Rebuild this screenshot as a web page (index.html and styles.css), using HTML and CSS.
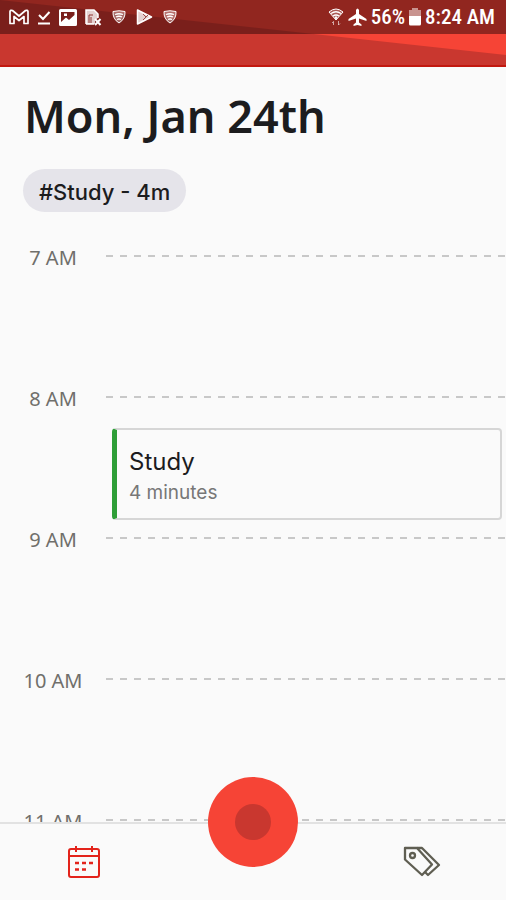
FILE: index.html
```html
<!DOCTYPE html>
<html lang="en">
<head>
<meta charset="utf-8">
<meta name="viewport" content="width=device-width, initial-scale=1">
<title>Mon, Jan 24th</title>
<link rel="stylesheet" href="styles.css">
</head>
<body>
<div class="app">
  <header class="top">
    <svg class="top-art" viewBox="0 0 506 65" preserveAspectRatio="none" aria-hidden="true"><path d="M0 0H506V55Z" fill="#f64436"/></svg>
    <div class="status">
      <div class="status-left">
        <svg width="20" height="16" viewBox="0 0 20 16" fill="none" stroke="#fff" stroke-width="1.7" stroke-linejoin="round"><path d="M1 14.500V2.500Q1.500 .8 3.500 1.500L10 7L16.500 1.500Q18.500 .8 19 2.500V14.500H15V7.500L10 11.500L5 7.500V14.500Z"/></svg>
        <svg width="14" height="16" viewBox="0 0 14 16" fill="none" stroke="#fff" stroke-width="2"><path d="M2 6L6 10L12.500 3M1 14.500H13"/></svg>
        <svg width="18" height="17" viewBox="0 0 18 17"><path fill="#fff" fill-rule="evenodd" d="M1.500 0H16.500Q18 0 18 1.500V15.500Q18 17 16.500 17H1.500Q0 17 0 15.500V1.500Q0 0 1.500 0ZM2 3V13L7 8.500L10 11L15.500 6V3ZM5 4.500H8V7H5Z"/></svg>
        <svg width="17" height="17" viewBox="0 0 17 17"><path fill="#fff" fill-opacity=".8" d="M1 1H9L13 5V9L10 11V15H1Z"/><path fill="none" stroke="#fff" stroke-width="1.500" d="M1 15V1H9L13 5V9M1 15H9"/><path d="M4 14V6H8M6 14V8" fill="none" stroke="#8e3430"/><path d="M10 10L15.500 16M15.500 10L10 16" fill="none" stroke="#fff" stroke-width="2"/></svg>
        <svg class="shield" width="14" height="14" viewBox="0 0 14 14"><path d="M1 1.500Q7 0 13 1.500Q13.500 9 7 13Q.5 9 1 1.500Z" fill="#fff" fill-opacity=".35" stroke="#fff"/><path d="M3 4.500Q7 3 11 4.500M4 7Q7 5.500 10 7M5 9.500Q7 8.500 9 9.500" fill="none" stroke="#fff" stroke-width="1.300"/></svg>
        <svg width="17" height="16" viewBox="0 0 17 16"><path d="M1.500 1L15.500 8L1.500 15Z" fill="#fff" fill-opacity=".8" stroke="#fff" stroke-width="1.500" stroke-linejoin="round"/><path d="M7 5L10 8L7 11M10 8L12 6" fill="none" stroke="#9b4b47"/></svg>
        <svg class="shield" width="14" height="14" viewBox="0 0 14 14"><path d="M1 1.500Q7 0 13 1.500Q13.500 9 7 13Q.5 9 1 1.500Z" fill="#fff" fill-opacity=".35" stroke="#fff"/><path d="M3 4.500Q7 3 11 4.500M4 7Q7 5.500 10 7M5 9.500Q7 8.500 9 9.500" fill="none" stroke="#fff" stroke-width="1.300"/></svg>
      </div>
      <div class="status-right">
        <svg width="16" height="18" viewBox="0 0 16 18" fill="none" stroke="#fff"><path d="M1 4Q8-2 15 4L8 12Z" fill="#fff" fill-opacity=".25"/><path d="M3 5.500Q8 2 13 5.500M5 8Q8 6 11 8" stroke-width="1.300"/><path d="M7 9L8 11L9 9Z" fill="#fff"/><path d="M5.500 17V13.500M4 15L5.500 13.500M10.500 13V17M10.500 17L12 15.500" stroke-opacity=".6"/></svg>
        <svg width="19" height="18" viewBox="0 0 19 18"><path fill="#fff" d="M8 6V2Q9.500-1 11 2V6L18.500 11V13L11 10.500V14.500L13.500 16.500V18L9.500 17L5.500 18V16.500L8 14.500V10.500L.5 13V11Z"/></svg>
        <span>56%</span>
        <svg width="12" height="18" viewBox="0 0 12 18"><path fill="#fff" fill-opacity=".5" d="M0 2H3V0H9V2H12V8H0Z"/><path fill="#fff" d="M0 8H12V16Q12 17.500 10.500 17.500H1.500Q0 17.500 0 16Z"/></svg>
        <span>8:24 AM</span>
      </div>
    </div>
  </header>

  <main class="day">
    <h1 class="date">Mon, Jan 24th</h1>
    <button class="chip" type="button">#Study - 4m</button>
    <section class="timeline" aria-label="Schedule">
      <div class="hour"><span class="time">7 AM</span><div class="slot"></div></div>
      <div class="hour"><span class="time">8 AM</span>
        <div class="slot"><article class="event"><h2>Study</h2><p>4 minutes</p></article></div>
      </div>
      <div class="hour"><span class="time">9 AM</span><div class="slot"></div></div>
      <div class="hour"><span class="time">10 AM</span><div class="slot"></div></div>
      <div class="hour"><span class="time">11 AM</span><div class="slot"></div></div>
    </section>
  </main>

  <nav class="tabs">
    <button class="tab tab-active" type="button" aria-label="Calendar">
      <svg width="34" height="34" viewBox="0 0 34 34" fill="none" stroke="currentColor" stroke-width="2"><rect x="2" y="4" width="30" height="28" rx="2"/><path d="M2 11H32M9 1V7M25 1V7"/><path stroke-width="2.500" d="M8 18H12M15 18H19M22 18H26M8 24.500H12M15 24.500H19"/></svg>
    </button>
    <button class="record" type="button" aria-label="Record"><span class="record-dot"></span></button>
    <button class="tab" type="button" aria-label="Tags">
      <svg width="38" height="34" viewBox="0 0 38 34" fill="none" stroke="currentColor" stroke-width="2.300" stroke-linejoin="round"><path d="M2 3H14L29 19.500L19 30L2 14.500Z"/><path d="M14 3H19L36 20L25 30L22 27"/><circle cx="9.500" cy="10.500" r="2.500"/></svg>
    </button>
  </nav>
</div>
</body>
</html>
```

FILE: styles.css
```css
* { box-sizing: border-box; }
body { margin: 0; background: #fafafa; font-family: "Noto Sans", sans-serif; color: #1c1c1e; }
h1, h2, p { margin: 0; }
button { border: 0; padding: 0; font: inherit; color: inherit; background: none; }
svg { display: block; flex: none; }

.app { display: flex; flex-direction: column; height: 100vh; overflow: hidden; }

.top { position: relative; flex: none; height: 67px; background: #c9372f; border-bottom: 2px solid #c2180f; }
.top-art { position: absolute; inset: 0; width: 100%; height: 100%; }
.status {
  position: relative; display: flex; align-items: center; justify-content: space-between;
  height: 34px; padding: 0 11px 0 9px; background: rgba(44, 8, 8, 0.5); color: #fff;
  font: 500 21px/34px "Roboto Condensed", "Liberation Sans Narrow", Roboto, sans-serif;
}
.status-left, .status-right { display: flex; align-items: center; }
.status-left { gap: 8px; }
.status-left .shield { margin: 0 2px; }
.status-right { gap: 4px; }

.day { flex: 1; min-height: 0; overflow: hidden; display: flex; flex-direction: column; align-items: flex-start; }
.date { margin: 19px 0 0 24px; font: 600 45px/60px "Noto Sans", sans-serif; }
.chip {
  flex: none; height: 43px; margin: 23px 0 0 23px; padding: 3px 16px 0; border-radius: 22px;
  background: #e5e4ea; font: 500 22px/40px Inter, "Noto Sans", sans-serif;
}
.timeline { align-self: stretch; flex: none; margin-top: 32px; }
.hour { display: flex; height: 141px; }
.time { flex: none; width: 106px; color: #706f6b; font-size: 20px; line-height: 28px; text-align: center; }
.slot {
  flex: 1; padding: 43px 4px 0 6px;
  background: repeating-linear-gradient(90deg, #c8c8c8 0 7px, transparent 7px 14px) 0 11px / 100% 2px no-repeat;
}
.event {
  height: 92px; padding: 16px 16px 14px 12px; border: 2px solid #d6d6d6;
  border-left: 5px solid #2e9e37; border-radius: 4px;
}
.event h2 { font: 400 24px/32px Inter, "Noto Sans", sans-serif; }
.event p { color: #777; font: 19px/30px Inter, "Noto Sans", sans-serif; }

.tabs {
  position: relative; z-index: 1; flex: none; display: grid; grid-template-columns: repeat(3, 1fr);
  align-items: center; justify-items: center;
  height: 78px; border-top: 2px solid #e2e2e2; background: #fafafa;
}
.tab { display: flex; align-items: center; justify-content: center; width: 100%; height: 100%; color: #5f5e52; }
.tab-active { color: #e3231b; }
.record {
  display: flex; align-items: center; justify-content: center;
  width: 90px; height: 90px; margin-top: -80px; border-radius: 50%; background: #f64436;
}
.record-dot { width: 36px; height: 36px; border-radius: 50%; background: #c9372f; }
```
